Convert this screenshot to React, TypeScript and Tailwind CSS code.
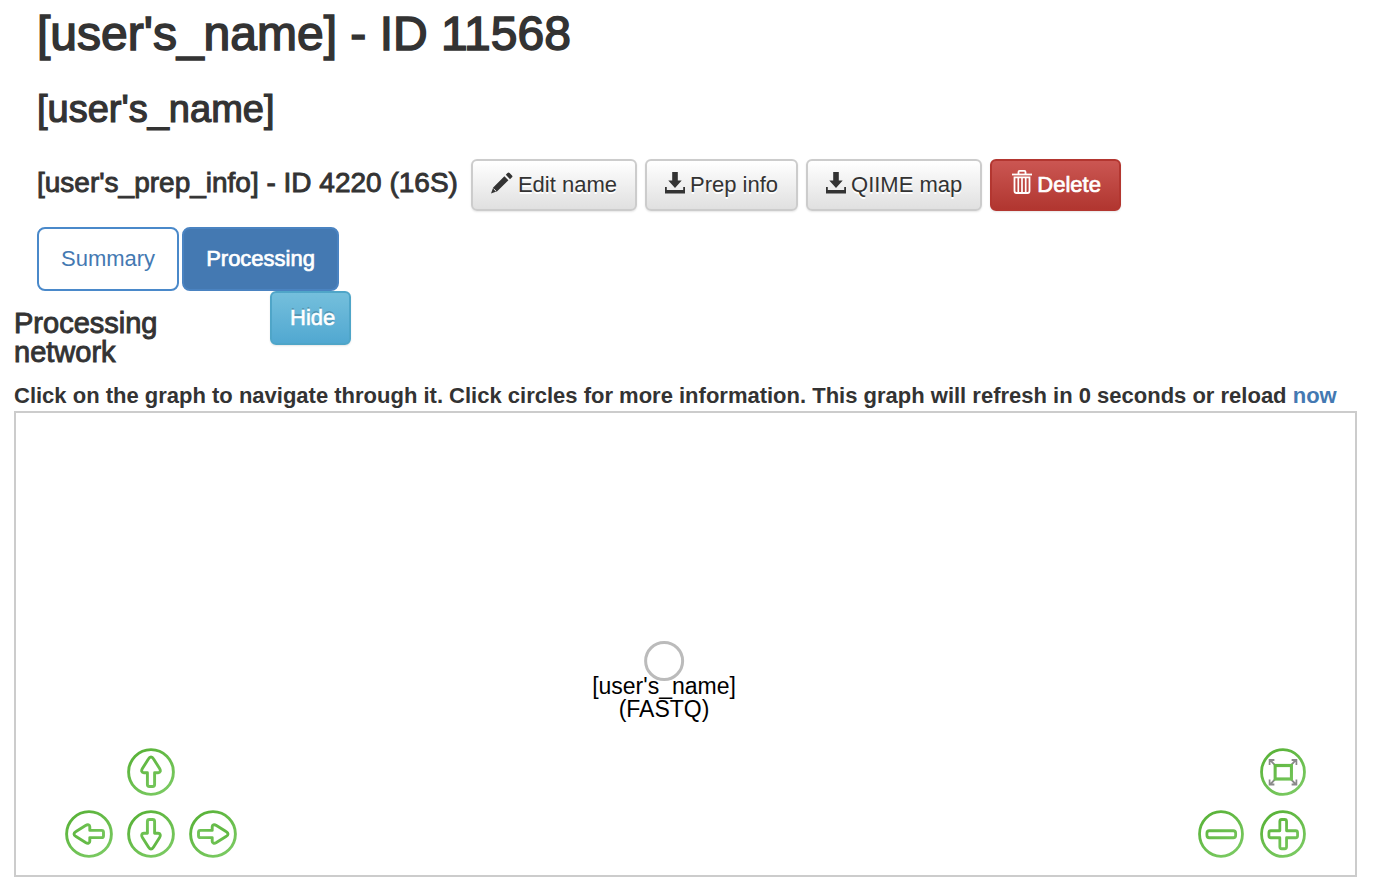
import type { ReactNode } from "react";

const defaultButton =
  "flex items-center gap-[5px] rounded-md border-2 border-[#ccc] bg-gradient-to-b from-white to-[#e0e0e0] px-[18px] py-2 text-[22px] leading-8 text-[#333] shadow-[0_1px_2px_rgba(0,0,0,0.1)] [text-shadow:0_2px_0_#fff]";

const mediumText = "[-webkit-text-stroke:0.032em_currentColor]";

function PencilIcon() {
  return (
    <svg className="-mt-1 size-[22px]" viewBox="0 0 22 22" fill="#333" aria-hidden="true">
      <path d="M0 21.5 2.2 15.4 13.4 4.2 17.4 8.2 6.2 19.3ZM14.8 2.8 16.5 1.1Q17.5 0 18.6 1L21 3.400Q21.900 4.400 21 5.300L19 7.200Z" />
      <path d="M2.600 16.800 5 19.200" stroke="#f5f5f5" strokeWidth="1" />
    </svg>
  );
}

function DownloadIcon() {
  return (
    <svg className="-mt-1 h-[22px] w-5" viewBox="0 0 20 22" fill="#333" aria-hidden="true">
      <path d="M7.200 0h5.600v8.500h3.900L10 16 3.300 8.500h3.900ZM0 15h1.800v3h16.400v-3H20v6.500H0Z" />
    </svg>
  );
}

function TrashIcon() {
  return (
    <svg className="-mt-1.5 h-6 w-5" viewBox="0 0 20 24" fill="none" stroke="#fff" aria-hidden="true">
      <path d="M0 4.500h20" strokeWidth="1.800" />
      <path d="M6.500 4V1.900q0-1 1-1h5q1 0 1 1V4" strokeWidth="1.800" />
      <path d="M2.500 7.300h15V21q0 2-2 2h-11q-2 0-2-2Z" strokeWidth="1.800" />
      <path d="M6.300 8v14M10 8v14M13.700 8v14" strokeWidth="1.700" />
    </svg>
  );
}

function RoundControl({ label, narrow, children }: { label: string; narrow?: boolean; children: ReactNode }) {
  return (
    <button type="button" aria-label={label} className={narrow ? "h-12 w-[46px]" : "size-12"}>
      <svg className="h-full w-full" viewBox="0 0 48 48" preserveAspectRatio="none" fill="none" stroke="url(#leaf)" strokeWidth="2.900" strokeLinejoin="round">
        <circle cx="24" cy="24" r="22.400" />
        {children}
      </svg>
    </button>
  );
}

const arrow =
  "M24 9C25.200 9 25.900 9.800 26.600 11L32.600 20.600C34 23 33.200 24.800 31.200 24.800H27.600V36.600Q27.600 38.500 25.700 38.500H22.300Q20.400 38.500 20.400 36.600V24.800H16.800C14.800 24.800 14 23 15.400 20.600L21.400 11C22.100 9.800 22.800 9 24 9Z";

export default function App() {
  return (
    <main className="bg-white pb-3 pl-3.5 pr-[23px] pt-[7px] font-['Liberation_Sans',Arial,sans-serif] text-[#333]">
      <svg className="absolute size-0" aria-hidden="true">
        <defs>
          <linearGradient id="leaf" gradientUnits="userSpaceOnUse" x1="8" y1="0" x2="38" y2="48">
            <stop offset="0" stopColor="#57b136" />
            <stop offset="1" stopColor="#7ccb64" />
          </linearGradient>
        </defs>
      </svg>

      <header className="pl-[23px]">
        <h1 className={`text-[48px] leading-[53px] ${mediumText}`}>[user's_name] - ID 11568</h1>
        <h2 className={`mt-7 text-[38px] leading-[42px] ${mediumText}`}>[user's_name]</h2>
        <div className="mt-[29px] flex flex-wrap items-center gap-2">
          <h3 className={`pb-1 pr-[5px] text-[28px] leading-8 ${mediumText}`}>[user's_prep_info] - ID 4220 (16S)</h3>
          <button type="button" className={defaultButton}>
            <PencilIcon />
            Edit name
          </button>
          <button type="button" className={defaultButton}>
            <DownloadIcon />
            Prep info
          </button>
          <button type="button" className={defaultButton}>
            <DownloadIcon />
            QIIME map
          </button>
          <button
            type="button"
            className="flex items-center gap-[5px] rounded-md border-2 border-[#b33630] bg-gradient-to-b from-[#cb5652] to-[#b13630] py-2 pl-5 pr-[18px] text-[22px] leading-8 text-white shadow-[0_1px_2px_rgba(0,0,0,0.1)] [-webkit-text-stroke:0.032em_currentColor]"
          >
            <TrashIcon />
            Delete
          </button>
        </div>
        <nav className="mt-4 flex gap-[3px] text-[22px] leading-8">
          <a href="#summary" className="rounded-lg border-2 border-[#4a89ca] px-[22px] py-3.5 text-[#4479b2]">
            Summary
          </a>
          <a
            href="#processing"
            aria-current="page"
            className="rounded-lg border-2 border-[#4a83c1] bg-[#4479b2] px-[22px] py-3.5 text-white [-webkit-text-stroke:0.032em_currentColor]"
          >
            Processing
          </a>
        </nav>
      </header>

      <section>
        <div className="flex items-start">
          <h4 className={`w-64 pr-20 pt-[18px] text-[29px] leading-[29px] ${mediumText}`}>Processing network</h4>
          <button
            type="button"
            className="rounded-md border-2 border-[#4fa5c8] bg-gradient-to-b from-[#74bfdc] to-[#51a8d1] pb-2.5 pl-[18px] pr-3.5 pt-2.5 text-[22px] leading-[30px] text-white shadow-[0_1px_2px_rgba(0,0,0,0.1)] [-webkit-text-stroke:0.024em_currentColor] [text-shadow:0_-2px_0_rgba(0,0,0,0.2)]"
          >
            Hide
          </button>
        </div>
        <p className="mt-[13px] text-[22px] font-bold leading-[31px]">
          Click on the graph to navigate through it. Click circles for more information. This graph will refresh in 0 seconds or reload{" "}
          <a href="#reload" className="text-[#4479b2]">
            now
          </a>
        </p>

        <div className="relative flex h-[466px] items-end justify-between border-2 border-[#ccc] px-[49px] pb-[17px]">
          <div className="absolute left-[648px] top-[228px] flex -translate-x-1/2 flex-col items-center">
            <span className="size-10 rounded-full border-[3px] border-[#bbb]" />
            <span className="-mt-1.5 text-center text-[23px] leading-[23px] text-black">
              [user's_name]
              <br />
              (FASTQ)
            </span>
          </div>

          <div className="flex flex-col items-center gap-3.5">
            <RoundControl label="Pan up">
              <path d={arrow} />
            </RoundControl>
            <div className="flex gap-3.5">
              <RoundControl label="Pan left">
                <path d={arrow} transform="rotate(-90 24 24)" />
              </RoundControl>
              <RoundControl label="Pan down">
                <path d={arrow} transform="rotate(180 24 24)" />
              </RoundControl>
              <RoundControl label="Pan right">
                <path d={arrow} transform="rotate(90 24 24)" />
              </RoundControl>
            </div>
          </div>

          <div className="flex flex-col items-end gap-3.5">
            <RoundControl label="Fit to view" narrow>
              <g stroke="#8a8a8a" strokeWidth="1.800" strokeLinejoin="miter">
                <path d="M15.500 17 10.500 12M10 17V12h5M32.500 17 37.500 12M33 12h5v5M15.500 31.500 10.500 36.500M10 31.500v5h5M32.500 31.500 37.500 36.500M33 36.500h5v-5" />
              </g>
              <rect x="15.800" y="17.500" width="17" height="13.500" strokeLinejoin="miter" strokeWidth="3.200" />
            </RoundControl>
            <div className="flex gap-4">
              <RoundControl label="Zoom out" narrow>
                <rect x="9.300" y="20.700" width="30" height="7" rx="2.500" />
              </RoundControl>
              <RoundControl label="Zoom in" narrow>
                <path d="M22.700 9.500h3q2 0 2 2V20.700H37.200q2 0 2 2v3q0 2-2 2H27.700V36.700q0 2-2 2h-3q-2 0-2-2V27.700H11.300q-2 0-2-2v-3q0-2 2-2H20.700V11.500q0-2 2-2Z" />
              </RoundControl>
            </div>
          </div>
        </div>
      </section>
    </main>
  );
}
